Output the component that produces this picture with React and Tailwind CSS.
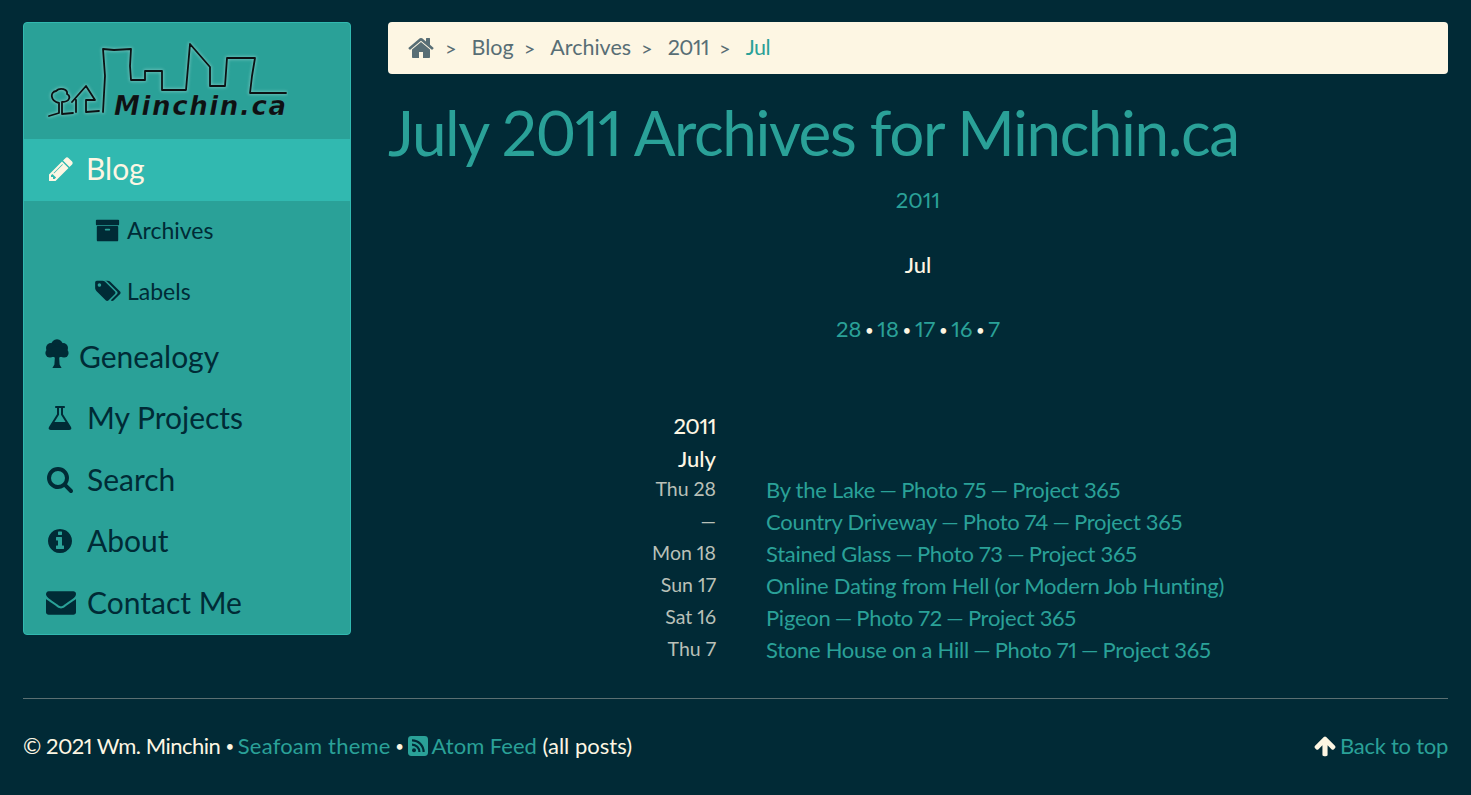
import React from "react";

const P = {
  home: "M1472 992v480q0 26-19 45t-45 19h-384v-384h-256v384h-384q-26 0-45-19t-19-45v-480q0-1 .5-3t.5-3l575-474 575 474q1 2 1 6zm223-69l-62 74q-8 9-21 11h-3q-13 0-21-7l-692-577-692 577q-12 8-24 7-13-2-21-11l-62-74q-8-10-7-23.5t11-22.5l719-599q32-26 76-26t76 26l244 204v-195q0-14 9-23t23-9h192q14 0 23 9t9 23v408l219 182q10 8 11 22.5t-7 23.5z",
  pencil: "M491 1536l91-91-235-235-91 91v107h128v128h107zm523-928q0-22-22-22-10 0-17 7l-542 542q-7 7-7 17 0 22 22 22 10 0 17-7l542-542q7-7 7-17zm-54-192l416 416-832 832h-416v-416zm683 96q0 53-37 90l-166 166-416-416 166-165q36-38 90-38 53 0 91 38l235 234q37 39 37 91z",
  archive: "M1088 832q0-26-19-45t-45-19h-256q-26 0-45 19t-19 45 19 45 45 19h256q26 0 45-19t19-45zm576-192v960q0 26-19 45t-45 19h-1408q-26 0-45-19t-19-45v-960q0-26 19-45t45-19h1408q26 0 45 19t19 45zm64-448v256q0 26-19 45t-45 19h-1536q-26 0-45-19t-19-45v-256q0-26 19-45t45-19h1536q26 0 45 19t19 45z",
  flask: "M1591 1448q56 89 21.5 152.5t-140.5 63.5h-1152q-106 0-140.5-63.5t21.5-152.5l503-793v-399h-64q-26 0-45-19t-19-45 19-45 45-19h512q26 0 45 19t19 45-19 45-45 19h-64v399zm-779-725l-272 429h712l-272-429-20-31v-436h-128v436z",
  search: "M1216 832q0-185-131.5-316.5t-316.5-131.5-316.5 131.5-131.5 316.5 131.5 316.5 316.5 131.5 316.5-131.5 131.5-316.5zm512 832q0 52-38 90t-90 38q-54 0-90-38l-343-342q-179 124-399 124-143 0-273.5-55.5t-225-150-150-225-55.5-273.5 55.5-273.5 150-225 225-150 273.5-55.5 273.5 55.5 225 150 150 225 55.5 273.5q0 220-124 399l343 343q37 37 37 90z",
  info: "M1152 1376v-160q0-14-9-23t-23-9h-96v-512q0-14-9-23t-23-9h-320q-14 0-23 9t-9 23v160q0 14 9 23t23 9h96v320h-96q-14 0-23 9t-9 23v160q0 14 9 23t23 9h448q14 0 23-9t9-23zm-128-896v-160q0-14-9-23t-23-9h-192q-14 0-23 9t-9 23v160q0 14 9 23t23 9h192q14 0 23-9t9-23zm640 416q0 209-103 385.5t-279.5 279.5-385.5 103-385.5-103-279.5-279.5-103-385.5 103-385.5 279.5-279.5 385.5-103 385.5 103 279.5 279.5 103 385.5z",
  envelope: "M1792 710v794q0 66-47 113t-113 47h-1472q-66 0-113-47t-47-113v-794q44 49 101 87 362 246 497 345 57 42 92.5 65.5t94.5 48 110 24.5h2q51 0 110-24.5t94.5-48 92.5-65.5q170-123 498-345 57-39 100-87zm0-294q0 79-49 151t-122 123q-376 261-468 325-10 7-42.5 30.5t-54 38-52 32.5-57.5 27-50 9h-2q-23 0-50-9t-57.5-27-52-32.5-54-38-42.5-30.5q-91-64-262-182.5t-205-142.5q-62-42-117-115.5t-55-136.5q0-78 41.5-130t118.5-52h1472q65 0 112.5 47t47.5 113z",
  up: "M1675 971q0 51-37 90l-75 75q-38 38-91 38-54 0-90-38l-294-293v704q0 52-37.5 84.5t-90.5 32.5h-128q-53 0-90.5-32.5t-37.5-84.5v-704l-294 293q-36 38-90 38t-90-38l-75-75q-38-38-38-90 0-53 38-91l651-651q35-37 90-37 54 0 91 37l651 651q37 39 37 91z",
};
const TAGS = "M448 448q0-53-37.5-90.5t-90.5-37.5-90.5 37.5-37.5 90.5 37.5 90.5 90.5 37.5 90.5-37.5 37.5-90.5zm1067 576q0 53-37 90l-491 492q-39 37-91 37-53 0-90-37l-715-716q-38-37-64.5-101t-26.5-117v-416q0-52 38-90t90-38h416q53 0 117 26.5t102 64.5l715 714q37 39 37 91zm384 0q0 53-37 90l-491 492q-39 37-91 37-36 0-59-14t-53-45l470-470q37-37 37-90 0-52-37-91l-715-714q-38-38-102-64.5t-117-26.5h224q53 0 117 26.5t102 64.5l715 714q37 39 37 91z";

function I({ d, vb = "0 0 1792 1792", className }) {
  return (
    <svg viewBox={vb} className={className} fill="currentColor" aria-hidden="true">
      <path d={d} />
    </svg>
  );
}

function Tree({ className }) {
  return (
    <svg viewBox="0 0 24 29" className={className} fill="currentColor" aria-hidden="true">
      <circle cx="12" cy="6" r="5.8" />
      <circle cx="6" cy="9" r="5" />
      <circle cx="18" cy="9" r="5" />
      <circle cx="5" cy="14" r="4.6" />
      <circle cx="19" cy="14" r="4.6" />
      <circle cx="12" cy="13" r="6" />
      <path d="M10 16h4l.6 9.5 2 3.5H7.4l2-3.5z" />
    </svg>
  );
}

function Rss({ className }) {
  return (
    <svg viewBox="0 0 20 20" className={className} aria-hidden="true">
      <rect width="20" height="20" rx="3.4" fill="#2aa198" />
      <circle cx="6" cy="14.2" r="2" fill="#012a36" />
      <path d="M4 8.6a7.4 7.4 0 0 1 7.4 7.5M4 4.4a11.6 11.6 0 0 1 11.6 11.7" fill="none" stroke="#012a36" strokeWidth="2.2" />
    </svg>
  );
}

const SKY = "M7 80 L17 77 L17 67 C8 65 8 56 14 55 C18 51 26 53 25 58 C29 60 28 66 20 66 L20 78 L31 77 M34 76 L34 64 M30 66 L44 50 L53 64 L44 64 L44 76 L57 75 M61 76 L63 40 L61 13 L72 14 L89 13 L88 30 L89 44 L103 44 L103 35 L120 35 L120 54 L144 54 L148 8 L168 31 L168 50 L183 50 L185 22 L213 22 L210 40 L208 57 L244 57";

function Logo() {
  return (
    <svg width="246" height="90" viewBox="0 0 246 90" className="block">
      <defs>
        <filter id="glow" x="-5%" y="-5%" width="110%" height="110%">
          <feGaussianBlur stdDeviation="1.6" />
        </filter>
      </defs>
      <g fill="none" strokeLinejoin="round" strokeLinecap="round">
        <path stroke="#a8ddd8" strokeWidth="3.4" opacity="0.5" filter="url(#glow)" d={SKY} />
        <path stroke="#0c1113" strokeWidth="1.8" d={SKY} />
      </g>
      <text x="72" y="79" fill="#0c1113" stroke="#a8ddd8" strokeOpacity="0.3" strokeWidth="0.5" fontFamily="'DejaVu Sans', sans-serif" fontStyle="italic" fontWeight="700" fontSize="26" textLength="172">Minchin.ca</text>
    </svg>
  );
}

function NavItem({ icon, label, active, sub }) {
  return (
    <a className={sub
      ? "flex items-center h-[61px] pb-[3px] pl-[72px] text-[23px] text-[#002b36]"
      : active
        ? "flex items-center h-[62px] pb-[3px] pl-[24px] text-[30px] text-[#fdf6e3] bg-[#31b9b0]"
        : "flex items-center h-[61.5px] pb-[1px] pl-[22px] text-[30px] text-[#002b36]"}>
      {icon}
      <span>{label}</span>
    </a>
  );
}

const Sep = () => <span className="mr-[15px] ml-[10px] text-[20px]">&gt;</span>;
const Dot = () => <span className="text-[#fdf6e3] text-[15px] align-[1px]">•</span>;

function Title({ text }) {
  const parts = text.split(" — ");
  return parts.map((p, i) => (
    <React.Fragment key={i}>
      {i > 0 && <span className="mx-[-1px]"> — </span>}
      {p}
    </React.Fragment>
  ));
}

const archive = [
  ["Thu 28", "By the Lake — Photo 75 — Project 365"],
  ["—", "Country Driveway — Photo 74 — Project 365"],
  ["Mon 18", "Stained Glass — Photo 73 — Project 365"],
  ["Sun 17", "Online Dating from Hell (or Modern Job Hunting)"],
  ["Sat 16", "Pigeon — Photo 72 — Project 365"],
  ["Thu 7", "Stone House on a Hill — Photo 71 — Project 365"],
];

export default function App() {
  return (
    <div className="min-h-[795px] bg-[#012a36] text-[#fdf6e3] font-['Lato','Liberation_Sans',sans-serif] proportional-nums px-[23px] pt-[22px] overflow-hidden">
      <div className="flex items-start gap-[37px]">
        <aside className="w-[328px] shrink-0 bg-[#2aa198] border border-[#31b9b0] rounded-[4px] overflow-hidden">
          <div className="h-[116px] pl-[18px] pt-[13px]"><Logo /></div>
          <NavItem active label="Blog" icon={<I d={P.pencil} className="w-[28px] h-[28px] mr-[11px] ml-[-1px]" />} />
          <NavItem sub label="Archives" icon={<I d={P.archive} className="w-[25px] h-[25px] mr-[7px] ml-[-1px]" />} />
          <NavItem sub label="Labels" icon={<I d={TAGS} vb="0 0 1920 1792" className="w-[26px] h-[24px] mr-[6px] ml-[-1px]" />} />
          <div className="mt-[3px]">
            <NavItem label="Genealogy" icon={<Tree className="w-[24px] h-[29px] mr-[10px] mb-[6px] ml-[-1px]" />} />
            <NavItem label="My Projects" icon={<I d={P.flask} className="w-[28px] h-[28px] mr-[13px]" />} />
            <NavItem label="Search" icon={<I d={P.search} className="w-[28px] h-[28px] mr-[13px]" />} />
            <NavItem label="About" icon={<I d={P.info} className="w-[28px] h-[28px] mr-[13px]" />} />
            <NavItem label="Contact Me" icon={<I d={P.envelope} className="w-[30px] h-[30px] mr-[11px]" />} />
          </div>
        </aside>
        <main className="flex-1 min-w-0">
          <nav className="h-[52px] pb-[1px] bg-[#fdf6e3] rounded-[4px] flex items-center pl-[19px] text-[21.5px] text-[#586e75]">
            <I d={P.home} className="w-[28px] h-[28px]" />
            <span className="mr-[15px] ml-[10px] text-[20px]">&gt;</span>
            <span>Blog</span>
            <Sep />
            <span>Archives</span>
            <Sep />
            <span className="tracking-[-0.5px]">2011</span>
            <Sep />
            <span className="text-[#2aa198] tracking-[-0.5px]">Jul</span>
          </nav>
          <h1 className="text-[62px] leading-[72px] tracking-[-1.4px] text-[#2aa198] mt-[22px]">July 2011 Archives for Minchin.ca</h1>
          <div className="text-center text-[22px] leading-[32px] mt-[16px]">
            <div className="text-[#2aa198]">2011</div>
            <div className="mt-[33px] font-medium">Jul</div>
            <div className="mt-[32px] text-[#2aa198] [word-spacing:-2px]">
              28 <Dot /> 18 <Dot /> 17 <Dot /> 16 <Dot /> 7
            </div>
          </div>
          <div className="mt-[63px] ml-[200px] grid grid-cols-[128px_1fr] gap-x-[50px] text-[22px] leading-[32px]">
            <div className="text-right font-medium leading-[34px] tracking-[-0.5px] text-[#fdf6e3]">2011</div><div></div>
            <div className="text-right font-medium leading-[31px] text-[#fdf6e3]">July</div><div></div>
            {archive.map(([d, t]) => (
              <React.Fragment key={t}>
                <div className="text-right text-[19.5px] leading-[29px] text-[#b9c0b8]">{d}</div>
                <div className="text-[#2aa198] tracking-[-0.27px]"><Title text={t} /></div>
              </React.Fragment>
            ))}
          </div>
        </main>
      </div>
      <footer className="mt-[32px] border-t border-[#5b6f72] pt-[31px] flex items-center justify-between text-[22px] leading-[32px]">
        <div className="flex items-center whitespace-pre">
          <span className="tracking-[-0.5px]">© 2021 Wm. Minchin </span>
          <span className="text-[15px]">•</span>
          <span className="tracking-[-2px]"> </span>
          <span className="text-[#2aa198] tracking-[0.2px]">Seafoam theme</span>
          <span className="tracking-[-1px]"> </span>
          <span className="text-[15px]">•</span>
          <span className="tracking-[-2px]"> </span>
          <Rss className="w-[20px] h-[20px] mr-[4px]" />
          <span className="text-[#2aa198]">Atom Feed</span>
          <span> (all posts)</span>
        </div>
        <div className="flex items-center">
          <I d={P.up} className="w-[24px] h-[24px] mr-[3px]" />
          <span className="text-[#2aa198] tracking-[-0.27px]">Back to top</span>
        </div>
      </footer>
    </div>
  );
}
